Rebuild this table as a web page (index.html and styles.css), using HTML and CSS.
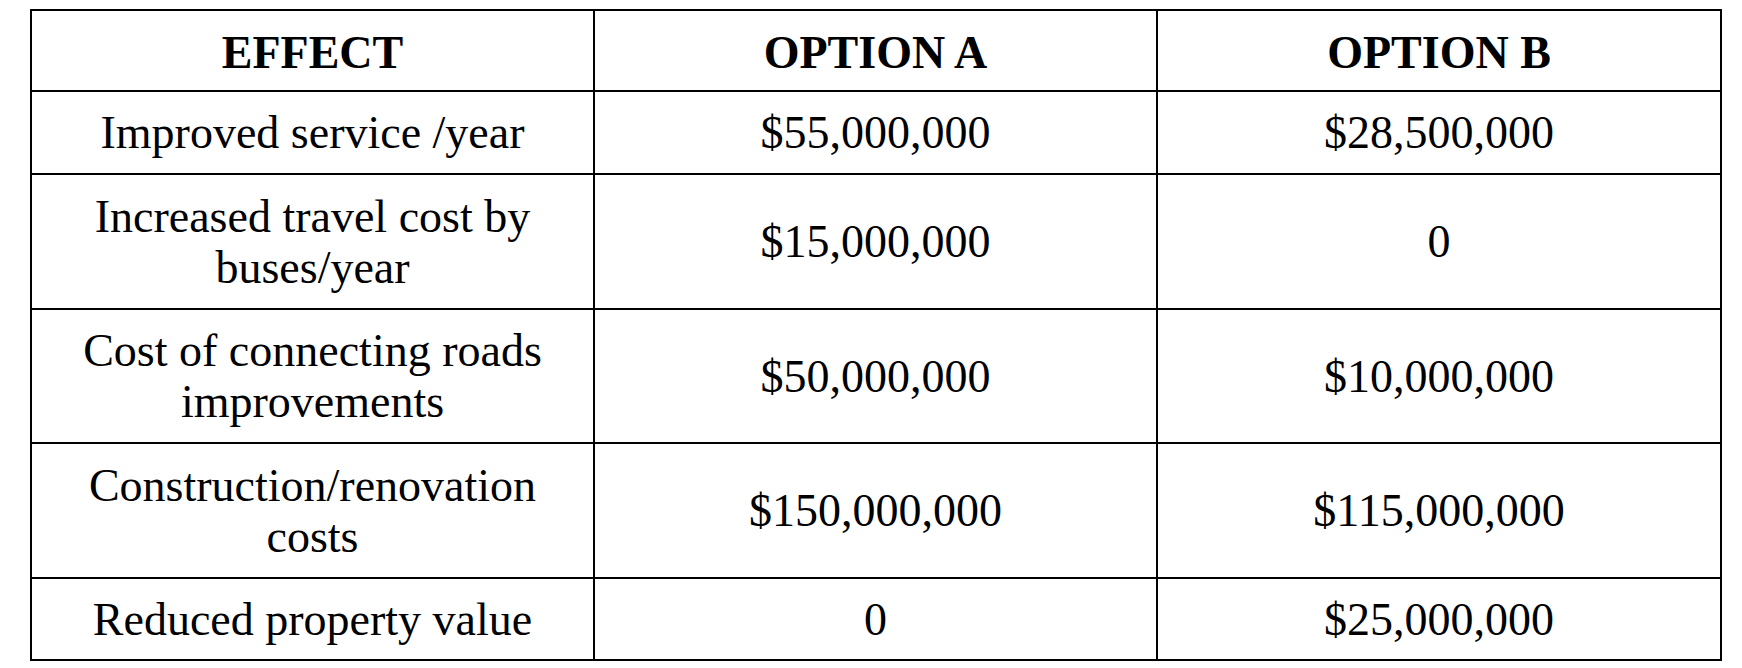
FILE: index.html
```html
<!DOCTYPE html>
<html lang="en">
<head>
<meta charset="utf-8">
<title>Options comparison</title>
<link rel="stylesheet" href="styles.css">
</head>
<body>
<table class="cmp">
  <colgroup>
    <col class="c1"><col class="c2"><col class="c3">
  </colgroup>
  <thead>
    <tr class="r-head">
      <th>EFFECT</th>
      <th>OPTION A</th>
      <th>OPTION B</th>
    </tr>
  </thead>
  <tbody>
    <tr class="r-1">
      <td>Improved service /year</td>
      <td>$55,000,000</td>
      <td>$28,500,000</td>
    </tr>
    <tr class="r-2">
      <td>Increased travel cost by<br>buses/year</td>
      <td>$15,000,000</td>
      <td>0</td>
    </tr>
    <tr class="r-3">
      <td>Cost of connecting roads<br>improvements</td>
      <td>$50,000,000</td>
      <td>$10,000,000</td>
    </tr>
    <tr class="r-4">
      <td>Construction/renovation<br>costs</td>
      <td>$150,000,000</td>
      <td>$115,000,000</td>
    </tr>
    <tr class="r-5">
      <td>Reduced property value</td>
      <td>0</td>
      <td>$25,000,000</td>
    </tr>
  </tbody>
</table>
</body>
</html>
```

FILE: styles.css
```css
html, body {
  margin: 0;
  padding: 0;
  background: #ffffff;
}

body {
  padding: 9px 0 0 30px;
}

.cmp {
  border-collapse: separate;
  border-spacing: 0;
  table-layout: fixed;
  width: 1692px;
  border-top: 2px solid #000;
  border-left: 2px solid #000;
  font-family: "Liberation Serif", "Times New Roman", serif;
  font-size: 46px;
  line-height: 51px;
  color: #000;
}

.c1 { width: 563px; }
.c2 { width: 563px; }
.c3 { width: 564px; }

.cmp th,
.cmp td {
  box-sizing: border-box;
  border-right: 2px solid #000;
  border-bottom: 2px solid #000;
  padding: 0 4px;
  text-align: center;
  vertical-align: middle;
  font-weight: normal;
}

.cmp th {
  font-weight: bold;
  padding-top: 4px;
}

.r-head th { height: 81px; }
.r-1 td { height: 83px; }
.r-2 td { height: 135px; }
.r-3 td { height: 134px; }
.r-4 td { height: 135px; }
.r-5 td { height: 82px; }
```
